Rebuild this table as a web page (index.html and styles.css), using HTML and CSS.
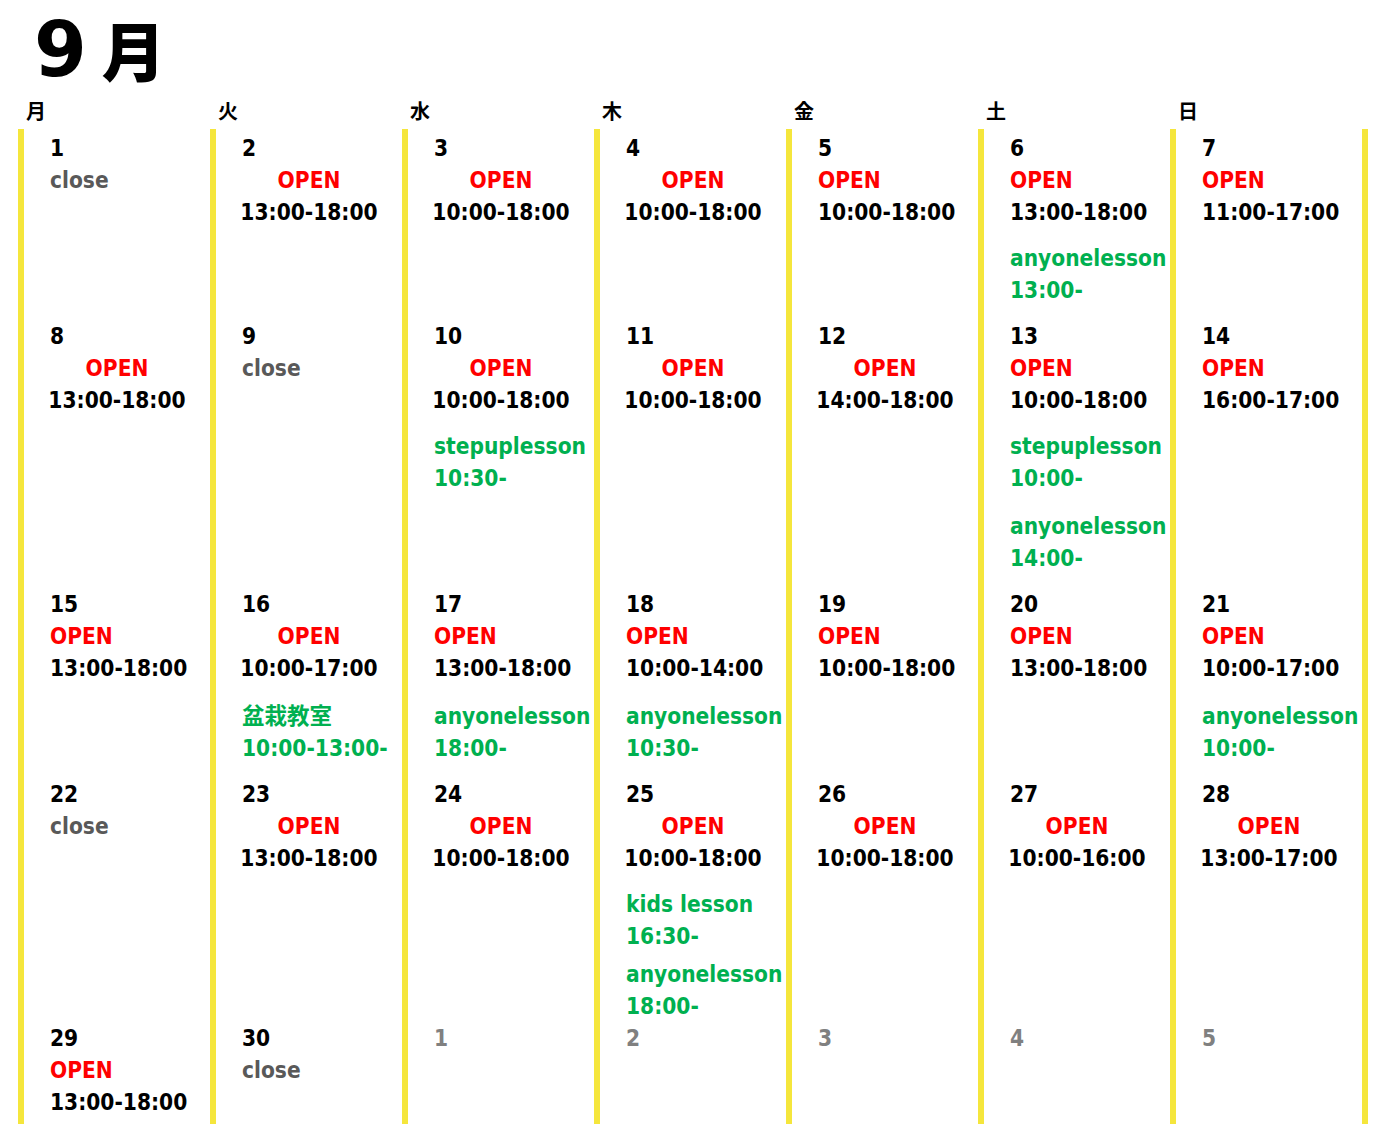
FILE: index.html
```html
<!DOCTYPE html>
<html lang="ja">
<head>
<meta charset="utf-8">
<title>9月</title>
<link rel="stylesheet" href="styles.css">
</head>
<body>
<div class="page">
  <h1 class="title"><span class="title-num">9</span><span class="title-month"> 月</span></h1>
  <div class="weekdays">
    <div class="wd">月</div><div class="wd">火</div><div class="wd">水</div><div class="wd">木</div><div class="wd">金</div><div class="wd">土</div><div class="wd">日</div>
  </div>
  <div class="cal">
    <!-- row 1 -->
    <div class="cell first"><div class="ln">1</div><div class="ln close">close</div></div>
    <div class="cell first"><div class="ln">2</div><div class="ln open c">OPEN</div><div class="ln c">13:00-18:00</div></div>
    <div class="cell first"><div class="ln">3</div><div class="ln open c">OPEN</div><div class="ln c">10:00-18:00</div></div>
    <div class="cell first"><div class="ln">4</div><div class="ln open c">OPEN</div><div class="ln c">10:00-18:00</div></div>
    <div class="cell first"><div class="ln">5</div><div class="ln open">OPEN</div><div class="ln">10:00-18:00</div></div>
    <div class="cell first"><div class="ln">6</div><div class="ln open">OPEN</div><div class="ln">13:00-18:00</div>
      <div class="ev"><div class="ln">anyonelesson</div><div class="ln">13:00-</div></div></div>
    <div class="cell first"><div class="ln">7</div><div class="ln open">OPEN</div><div class="ln">11:00-17:00</div></div>
    <!-- row 2 -->
    <div class="cell"><div class="ln">8</div><div class="ln open c">OPEN</div><div class="ln c">13:00-18:00</div></div>
    <div class="cell"><div class="ln">9</div><div class="ln close">close</div></div>
    <div class="cell"><div class="ln">10</div><div class="ln open c">OPEN</div><div class="ln c">10:00-18:00</div>
      <div class="ev"><div class="ln">stepuplesson</div><div class="ln">10:30-</div></div></div>
    <div class="cell"><div class="ln">11</div><div class="ln open c">OPEN</div><div class="ln c">10:00-18:00</div></div>
    <div class="cell"><div class="ln">12</div><div class="ln open c">OPEN</div><div class="ln c">14:00-18:00</div></div>
    <div class="cell"><div class="ln">13</div><div class="ln open">OPEN</div><div class="ln">10:00-18:00</div>
      <div class="ev"><div class="ln">stepuplesson</div><div class="ln">10:00-</div></div>
      <div class="ev ev-wide"><div class="ln">anyonelesson</div><div class="ln">14:00-</div></div></div>
    <div class="cell"><div class="ln">14</div><div class="ln open">OPEN</div><div class="ln">16:00-17:00</div></div>
    <!-- row 3 -->
    <div class="cell"><div class="ln">15</div><div class="ln open">OPEN</div><div class="ln">13:00-18:00</div></div>
    <div class="cell"><div class="ln">16</div><div class="ln open c">OPEN</div><div class="ln c">10:00-17:00</div>
      <div class="ev ev-wide"><div class="ln">盆栽教室</div><div class="ln">10:00-13:00-</div></div></div>
    <div class="cell"><div class="ln">17</div><div class="ln open">OPEN</div><div class="ln">13:00-18:00</div>
      <div class="ev ev-wide"><div class="ln">anyonelesson</div><div class="ln">18:00-</div></div></div>
    <div class="cell"><div class="ln">18</div><div class="ln open">OPEN</div><div class="ln">10:00-14:00</div>
      <div class="ev ev-wide"><div class="ln">anyonelesson</div><div class="ln">10:30-</div></div></div>
    <div class="cell"><div class="ln">19</div><div class="ln open">OPEN</div><div class="ln">10:00-18:00</div></div>
    <div class="cell"><div class="ln">20</div><div class="ln open">OPEN</div><div class="ln">13:00-18:00</div></div>
    <div class="cell"><div class="ln">21</div><div class="ln open">OPEN</div><div class="ln">10:00-17:00</div>
      <div class="ev ev-wide"><div class="ln">anyonelesson</div><div class="ln">10:00-</div></div></div>
    <!-- row 4 -->
    <div class="cell"><div class="ln">22</div><div class="ln close">close</div></div>
    <div class="cell"><div class="ln">23</div><div class="ln open c">OPEN</div><div class="ln c">13:00-18:00</div></div>
    <div class="cell"><div class="ln">24</div><div class="ln open c">OPEN</div><div class="ln c">10:00-18:00</div></div>
    <div class="cell tight"><div class="ln">25</div><div class="ln open c">OPEN</div><div class="ln c">10:00-18:00</div>
      <div class="ev"><div class="ln">kids lesson</div><div class="ln">16:30-</div></div>
      <div class="ev ev-close"><div class="ln">anyonelesson</div><div class="ln">18:00-</div></div></div>
    <div class="cell"><div class="ln">26</div><div class="ln open c">OPEN</div><div class="ln c">10:00-18:00</div></div>
    <div class="cell"><div class="ln">27</div><div class="ln open c">OPEN</div><div class="ln c">10:00-16:00</div></div>
    <div class="cell"><div class="ln">28</div><div class="ln open c">OPEN</div><div class="ln c">13:00-17:00</div></div>
    <!-- row 5 -->
    <div class="cell"><div class="ln">29</div><div class="ln open">OPEN</div><div class="ln">13:00-18:00</div></div>
    <div class="cell"><div class="ln">30</div><div class="ln close">close</div></div>
    <div class="cell"><div class="ln other">1</div></div>
    <div class="cell"><div class="ln other">2</div></div>
    <div class="cell"><div class="ln other">3</div></div>
    <div class="cell"><div class="ln other">4</div></div>
    <div class="cell"><div class="ln other">5</div></div>
  </div>
</div>
</body>
</html>
```
FILE: styles.css
```css
html, body {
  margin: 0;
  padding: 0;
  background: #ffffff;
  color: #000000;
}

.page {
  padding-left: 18px;
}

.title {
  margin: 0;
  height: 96px;
  padding-left: 16px;
  font-weight: bold;
  line-height: 96px;
  white-space: nowrap;
  overflow: visible;
}

.title-num {
  font-family: "DejaVu Sans", sans-serif;
  font-size: 76px;
}

.title-month {
  font-family: "Noto Sans CJK JP", sans-serif;
  font-size: 64px;
  font-weight: 900;
}

.weekdays {
  display: grid;
  grid-template-columns: repeat(7, 192px);
  height: 33px;
}

.wd {
  padding-left: 8px;
  font-family: "Noto Sans CJK JP", sans-serif;
  font-weight: bold;
  font-size: 20px;
  line-height: 30px;
}

.cal {
  display: grid;
  grid-template-columns: repeat(7, 192px);
  width: max-content;
  border-right: 6px solid #f5e63c;
  font-family: "DejaVu Sans Condensed", "DejaVu Sans", "Noto Sans CJK JP", sans-serif;
  font-stretch: condensed;
  font-weight: bold;
  font-size: 22.5px;
}

.cell {
  border-left: 6px solid #f5e63c;
  padding: 0 0 14px 0;
  min-width: 0;
}

.cell.first {
  padding-top: 3px;
}

.cell.tight {
  padding-bottom: 0;
}

.ln {
  padding-left: 26px;
  line-height: 32px;
  height: 32px;
  white-space: nowrap;
}

.ln.c {
  padding-left: 0;
  text-align: center;
}

.open {
  color: #ff0000;
}

.close {
  color: #595959;
}

.other {
  color: #808080;
}

.ev {
  margin-top: 14px;
  color: #00b050;
}

.ev-wide {
  margin-top: 16px;
}

.ev-close {
  margin-top: 6px;
}
```
